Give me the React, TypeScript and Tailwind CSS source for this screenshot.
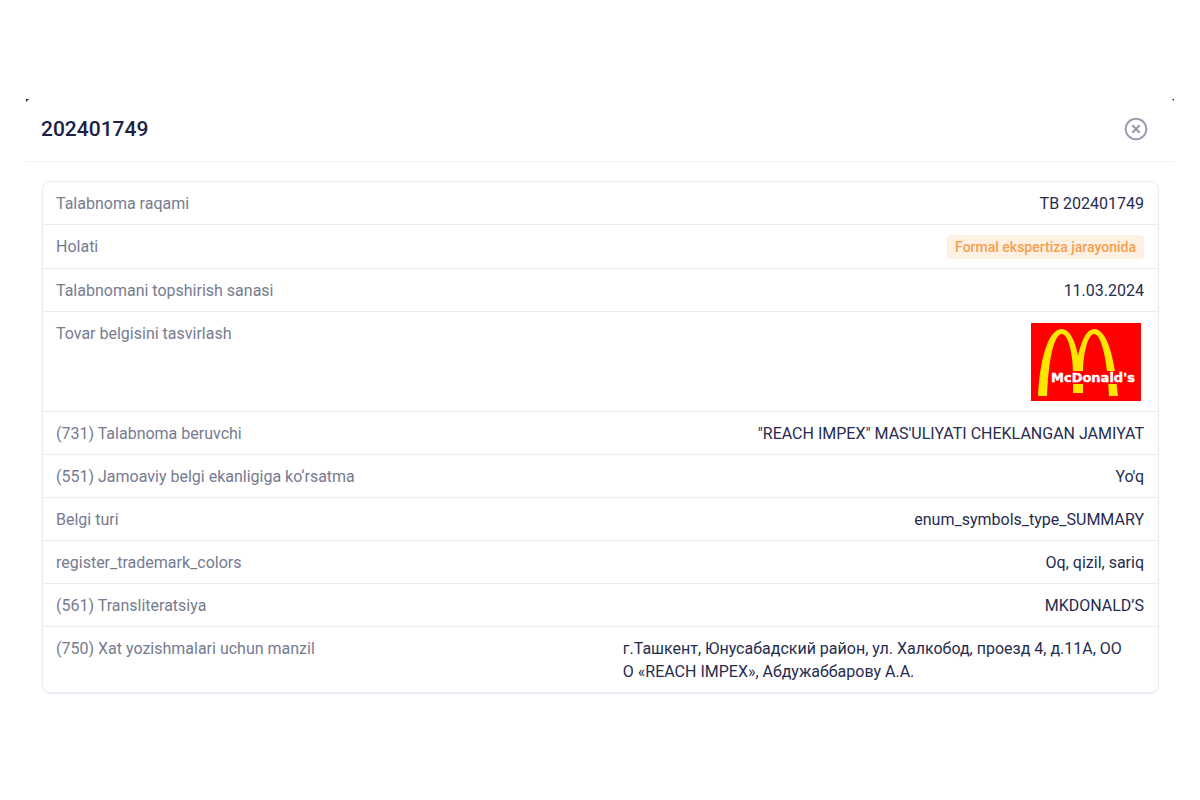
import type { ReactNode } from 'react';

interface DetailRow {
  label: string;
  value: ReactNode;
}

function BrandImage() {
  return (
    <svg
      width="110"
      height="78"
      viewBox="0 0 110 78"
      role="img"
      aria-label="McDonald's"
      className="mt-px mr-[3px] mb-px ml-auto block"
    >
      <rect width="110" height="78" fill="#ff0000" />
      <path
        d="M7 73C9 36 17 6 31 6C39 6 45 20 47 33C50 20 55 6 63 6C77 6 84 38 87 73H78C77 42 71 11 63 11C57 11 52 31 52 50V70H42V50C42 31 37 11 31 11C22 11 17 42 16 73Z"
        fill="#ffe600"
      />
      <rect x="20" y="48" width="87" height="13" fill="#ff0000" />
      <text
        x="20"
        y="59"
        fontFamily="'DejaVu Sans', sans-serif"
        fontWeight="700"
        fontSize="13"
        fill="#ffffff"
        stroke="#ffffff"
        strokeWidth="0.4"
      >
        McDonald's
      </text>
    </svg>
  );
}

const rows: DetailRow[] = [
  { label: 'Talabnoma raqami', value: 'TB 202401749' },
  {
    label: 'Holati',
    value: (
      <span className="inline-block rounded-[4px] bg-[#fef0e3] px-2 align-top text-[14px] leading-[24px] font-medium text-[#f7a04f]">
        Formal ekspertiza jarayonida
      </span>
    ),
  },
  { label: 'Talabnomani topshirish sanasi', value: '11.03.2024' },
  { label: 'Tovar belgisini tasvirlash', value: <BrandImage /> },
  { label: '(731) Talabnoma beruvchi', value: `"REACH IMPEX" MAS'ULIYATI CHEKLANGAN JAMIYAT` },
  { label: '(551) Jamoaviy belgi ekanligiga ko‘rsatma', value: "Yo'q" },
  { label: 'Belgi turi', value: 'enum_symbols_type_SUMMARY' },
  { label: 'register_trademark_colors', value: 'Oq, qizil, sariq' },
  { label: '(561) Transliteratsiya', value: 'MKDONALD’S' },
  {
    label: '(750) Xat yozishmalari uchun manzil',
    value: (
      <p className="text-left break-all">
        г.Ташкент, Юнусабадский район, ул. Халкобод, проезд 4, д.11А, ОО
        <br />
        О «REACH IMPEX», Абдужаббарову А.А.
      </p>
    ),
  },
];

export default function App() {
  return (
    <div className="min-h-screen bg-white px-[26px] pt-[100px] pb-8 font-['Roboto',sans-serif] text-[#262c50]">
      <section role="dialog" aria-labelledby="dialog-title" className="relative">
        {/* backdrop showing past the rounded corners */}
        <svg width="3" height="3" viewBox="0 0 3 3" aria-hidden="true" className="absolute -top-px left-0">
          <path d="M0 0H3L0 3Z" fill="#22242e" />
        </svg>
        <svg width="2" height="2" viewBox="0 0 2 2" aria-hidden="true" className="absolute -top-px right-0">
          <path d="M0 0H2V2Z" fill="#22242e" />
        </svg>

        <header className="flex items-center justify-between border-b border-[#f1f1f6] pt-[15px] pr-[26px] pb-[18px] pl-[15px]">
          <h1 id="dialog-title" className="text-[21px] leading-[28px] font-medium text-[#1b2147]">
            202401749
          </h1>
          <button type="button" aria-label="Yopish" className="text-[#9a9eb0]">
            <svg width="24" height="24" viewBox="0 0 24 24" fill="none" stroke="currentColor" strokeWidth="2">
              <circle cx="12" cy="12" r="10.3" />
              <path d="M8.3 8.3L15.7 15.7M15.7 8.3L8.3 15.7" strokeWidth="2.2" />
            </svg>
          </button>
        </header>

        <div className="pt-[19px] pr-[15px] pl-4">
          <div className="overflow-hidden rounded-lg border border-[#ebebf6] shadow-[0_1px_1px_#ebebf6]">
            <table className="w-full text-[16px] leading-[23px]">
              <tbody>
                {rows.map((row) => (
                  <tr key={row.label} className="border-b border-[#ebebf6] last:border-b-0">
                    <th scope="row" className="pt-[10px] pr-4 pb-[9px] pl-[13px] text-left align-top font-normal text-[#767b91]">
                      {row.label}
                    </th>
                    <td className="w-[48%] pt-[10px] pr-[14px] pb-[9px] text-right align-top">{row.value}</td>
                  </tr>
                ))}
              </tbody>
            </table>
          </div>
        </div>
      </section>
    </div>
  );
}
